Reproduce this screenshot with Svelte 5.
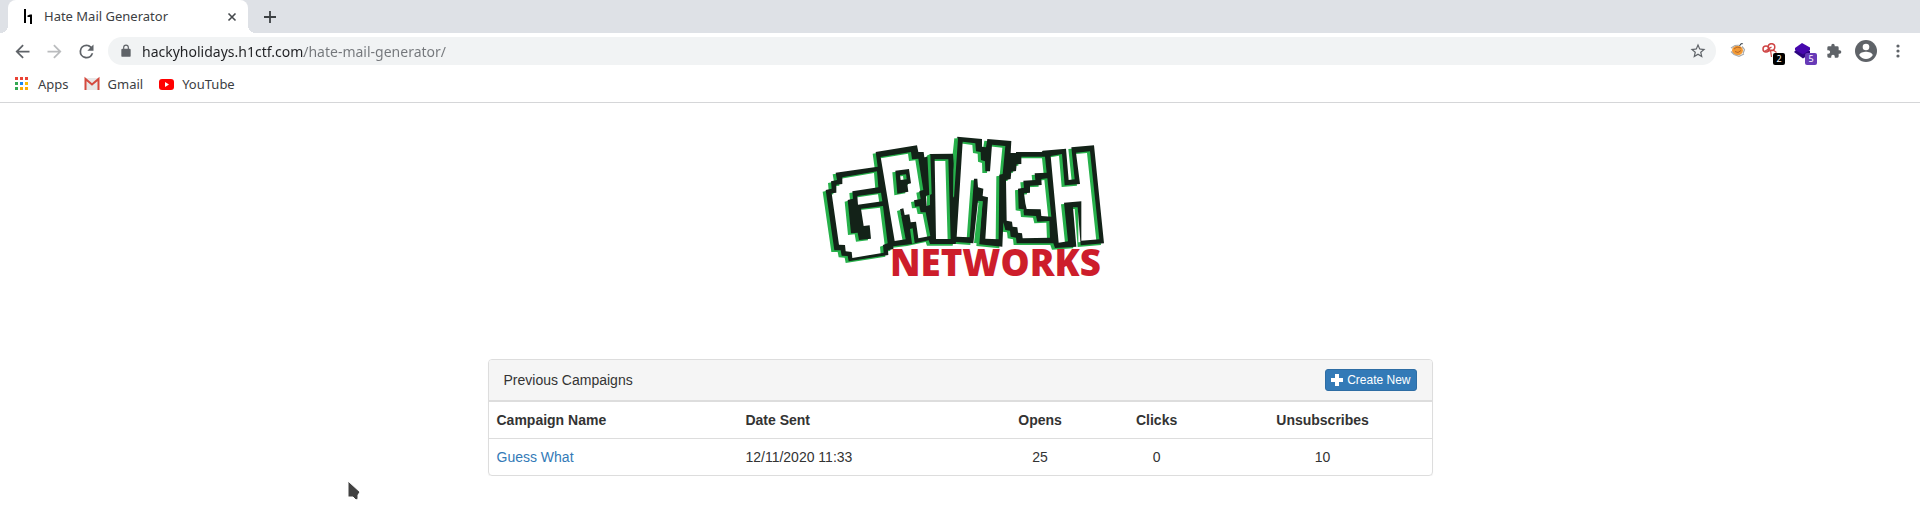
<script>
  const bookmarks = ['Apps', 'Gmail', 'YouTube'];
  const campaigns = [
    { name: 'Guess What', sent: '12/11/2020 11:33', opens: 25, clicks: 0, unsubscribes: 10 }
  ];
  const appColors = ['#ea4335', '#ea4335', '#ea4335', '#34a853', '#1a87f0', '#fbbc05', '#34a853', '#fbab05', '#fbab05'];
  let url = $state('hackyholidays.h1ctf.com/hate-mail-generator/');
</script>

<div class="browser">
  <div class="tabstrip">
    <div class="tab">
      <svg class="favicon" width="16" height="16" viewBox="0 0 16 16" aria-hidden="true">
        <path d="M4 0h2v14H4zM10 5.500h2V15h-2V8H7.500V6.500z" />
      </svg>
      <span class="tab-title">Hate Mail Generator</span>
      <button class="icon small" aria-label="Close tab">
        <svg width="10" height="10" viewBox="0 0 10 10"><path d="M1.500 1.500l7 7m0-7l-7 7" stroke="#45494d" stroke-width="1.600" /></svg>
      </button>
    </div>
    <button class="icon newtab" aria-label="New tab">
      <svg width="12" height="12" viewBox="0 0 12 12"><path d="M6 0v12M0 6h12" stroke="#3c4043" stroke-width="1.800" /></svg>
    </button>
  </div>

  <div class="toolbar">
    <button class="icon" aria-label="Back">
      <svg width="21" height="21" viewBox="0 0 24 24"><path fill="#5f6368" d="M20 11H7.830l5.590-5.590L12 4l-8 8 8 8 1.410-1.410L7.830 13H20z" /></svg>
    </button>
    <button class="icon" aria-label="Forward">
      <svg width="21" height="21" viewBox="0 0 24 24"><path fill="#babcbe" d="M4 11h12.170l-5.590-5.590L12 4l8 8-8 8-1.410-1.410L16.170 13H4z" /></svg>
    </button>
    <button class="icon" aria-label="Reload">
      <svg width="21" height="21" viewBox="0 0 24 24"><path fill="#5f6368" d="M17.650 6.350A7.950 7.950 0 0 0 12 4a8 8 0 1 0 7.730 10h-2.080A6 6 0 1 1 12 6c1.660 0 3.140.690 4.220 1.780L13 11h7V4z" /></svg>
    </button>
    <div class="omnibox">
      <svg width="14" height="14" viewBox="0 0 24 24" aria-hidden="true"><path fill="#5f6368" d="M18 8h-1V6A5 5 0 0 0 7 6v2H6a2 2 0 0 0-2 2v10a2 2 0 0 0 2 2h12a2 2 0 0 0 2-2V10a2 2 0 0 0-2-2zM9 8V6a3 3 0 0 1 6 0v2z" /></svg>
      <input type="text" aria-label="Address" bind:value={url} />
      <button class="icon small" aria-label="Bookmark this page">
        <svg width="18" height="18" viewBox="0 0 24 24"><path fill="#5f6368" d="M22 9.240l-7.190-.62L12 2 9.190 8.630 2 9.240l5.460 4.730L5.820 21 12 17.270 18.180 21l-1.630-7.030zM12 15.400l-3.760 2.270 1-4.280-3.320-2.880 4.380-.38L12 6.100l1.710 4.040 4.380.38-3.320 2.880 1 4.280z" /></svg>
      </button>
    </div>
    <button class="icon" aria-label="Cookie extension">
      <svg width="16" height="16" viewBox="0 0 16 16">
        <ellipse cx="7.500" cy="7.500" rx="5.500" ry="4.800" fill="#f29a35" />
        <path d="M1 5l4-2.500 5-.5 3-1.500M1 8.500l3 3 5 1.800 5-2.300M12 3.500l2.500 3-1.500 4" fill="none" stroke="#a9abad" stroke-width="1.200" />
        <path d="M4 6l3-2 4 1M5 8.500l3 1 3-2" fill="none" stroke="#b4682a" stroke-width="1" />
        <path d="M9.500 3l2-3 1 1" fill="none" stroke="#3e4b55" stroke-width="1" />
      </svg>
    </button>
    <button class="icon" aria-label="Request tracker extension">
      <svg width="16" height="16" viewBox="0 0 16 16" fill="none" stroke="#cf4545" stroke-width="1.500">
        <circle cx="4" cy="6" r="3" /><circle cx="9.500" cy="4" r="3.300" /><path d="M5 8l7-.5 2.500 2M8.500 7l1 7M2.500 8.500l7-4.500" stroke-width="1.200" />
      </svg>
      <span class="badge">2</span>
    </button>
    <button class="icon" aria-label="Technology extension">
      <svg width="16" height="16" viewBox="0 0 16 16"><path fill="#2c0580" d="M0 9l2-2h12l2 1v3l-7 4.500z" /><path fill="#4608ad" d="M8 0l8 4.500v2.500l-7 4.500L1 7V5z" /></svg>
      <span class="badge purple">5</span>
    </button>
    <button class="icon" aria-label="Extensions">
      <svg width="16" height="16" viewBox="0 0 24 24"><path fill="#5f6368" d="M20.500 11H19V7a2 2 0 0 0-2-2h-4V3.500a2.500 2.500 0 0 0-5 0V5H4a2 2 0 0 0-2 2v3.800h1.500a2.700 2.700 0 0 1 0 5.400H2V20a2 2 0 0 0 2 2h3.800v-1.500a2.700 2.700 0 0 1 5.400 0V22H17a2 2 0 0 0 2-2v-4h1.500a2.500 2.500 0 0 0 0-5z" /></svg>
    </button>
    <button class="icon" aria-label="Profile">
      <svg width="22" height="22" viewBox="0 0 22 22"><circle cx="11" cy="11" r="11" fill="#5f6368" /><circle cx="11" cy="7" r="3.300" fill="#fff" /><path fill="#fff" d="M4.300 15.200c0-2.300 4.500-3.400 6.700-3.400s6.700 1.100 6.700 3.400a7.900 7.900 0 0 1-13.400 0z" /></svg>
    </button>
    <button class="icon" aria-label="Menu">
      <svg width="4" height="14" viewBox="0 0 4 14" fill="#5f6368"><circle cx="2" cy="2" r="1.600" /><circle cx="2" cy="7" r="1.600" /><circle cx="2" cy="12" r="1.600" /></svg>
    </button>
  </div>

  <nav class="bookmarks" aria-label="Bookmarks">
    {#each bookmarks as label}
      <a href="#top">
        {#if label === 'Apps'}
          <svg width="16" height="16" viewBox="0 0 16 16" aria-hidden="true">
            {#each appColors as color, i}
              <rect x={1 + (i % 3) * 5} y={1 + Math.floor(i / 3) * 5} width="3" height="3" fill={color} />
            {/each}
          </svg>
        {:else if label === 'Gmail'}
          <svg width="16" height="16" viewBox="0 0 16 16" aria-hidden="true">
            <path fill="#e8e8e8" d="M1 2h14v12H1z" /><path fill="none" stroke="#d44a3f" stroke-width="2" d="M1.500 14V3L8 8.500 14.500 3V14" />
          </svg>
        {:else}
          <svg width="16" height="16" viewBox="0 0 16 16" aria-hidden="true">
            <rect x="1" y="3" width="15" height="11" rx="3" fill="#f00" /><path fill="#fff" d="M7 6l4 2.500L7 11z" />
          </svg>
        {/if}
        <span>{label}</span>
      </a>
    {/each}
  </nav>
</div>

<main id="top">
  <svg class="logo" viewBox="0 0 900 510" role="img" aria-label="Grinch Networks">
    <defs>
      <path
        id="blocks"
        fill-rule="evenodd"
        d="M77 143L203 125L197 81L321 61L325 81L341 81L343 97L355 95L360 87L429 86L432 130L442 35L516 42L516 65L528 67L532 42L604 48L602 84L618 84L618 81L695 81L698 77L768 71L776 165L794 163L784 67L852 61L882 355L812 361L803 247L789 247L799 365L735 369L730 355L620 355L618 338L602 335L600 317L586 315L580 292L577 365L508 358L518 229L504 227L490 355L438 351L437 357L360 357L356 346L300 358L250 364L250 372L234 376L235 390L116 409L113 393L95 392L92 376L73 376L47 195L65 191L63 169L81 165Z
        M97 157L201 139L205 187L127 199L129 221L113 225L123 325L143 323L147 345L183 341L179 301L161 303L153 251L219 243L233 355L219 360L221 383L127 399L125 381L107 379L105 360L87 359L65 205L79 203L79 179L97 177Z
        M142 213L213 203L217 229L144 239Z
        M212 96L303 81L306 103L325 101L340 195L328 198L332 222L312 226L315 245L328 244L332 262L347 262L361 333L325 340L318 290L302 292L298 268L284 270L280 250L270 253L287 343L254 348Z
        M256 137L297 132L303 175L292 178L295 200L262 206Z
        M270 150L288 148L290 163L272 165Z
        M348 212L360 209L360 240L350 243Z
        M374 103L415 103L422 342L378 342Z
        M458 50L496 55L498 79L512 81L513 105L525 109L526 139L540 139L546 59L586 63L578 147L568 149L566 343L526 341L534 217L518 213L520 191L504 187L502 161L492 161L479 337L440 335Z
        M634 95L705 95L710 143L674 145L676 165L640 167L642 188L624 191L626 251L640 253L642 271L678 273L682 290L718 288L720 338L638 340L636 325L624 323L622 307L608 305L606 290L590 287L588 165L602 162L604 140L618 138L620 118L634 117Z
        M712 160L694 162L695 180L660 182L660 203L642 205L646 235L650 252L692 253L694 273L724 275Z
        M722 93L756 87L764 181L810 177L798 83L840 79L868 343L814 347L814 229L762 233L774 349L746 353Z"
      />
    </defs>
    <use href="#blocks" fill="#27b14b" transform="translate(-9 5)" />
    <use href="#blocks" fill="#132218" />
    <path fill="#27b14b" d="M352 91l9-3 4 119-7 4zM440 38l4 2-12 178-3-4 1-80zM300 312l8-2 6 44-8 2zM506 230l12-1-12 126-14-1z" />
    <text x="240" y="452">NETWORKS</text>
  </svg>

  <section class="panel">
    <header>
      <h1>Previous Campaigns</h1>
      <button class="create">
        <svg width="12" height="12" viewBox="0 0 12 12" aria-hidden="true"><path fill="#fff" d="M4 0h4v4h4v4H8v4H4V8H0V4h4z" /></svg>
        Create New
      </button>
    </header>
    <table>
      <thead>
        <tr>
          <th class="name">Campaign Name</th>
          <th class="date">Date Sent</th>
          <th class="opens num">Opens</th>
          <th class="clicks num">Clicks</th>
          <th class="num">Unsubscribes</th>
        </tr>
      </thead>
      <tbody>
        {#each campaigns as c}
          <tr>
            <td><a href="#top">{c.name}</a></td>
            <td>{c.sent}</td>
            <td class="num">{c.opens}</td>
            <td class="num">{c.clicks}</td>
            <td class="num">{c.unsubscribes}</td>
          </tr>
        {/each}
      </tbody>
    </table>
  </section>
</main>

<svg class="pointer" width="16" height="24" viewBox="0 0 16 24" aria-hidden="true">
  <path d="M1 1v16h5l3 3 2-1v-4l2-3z" fill="#414141" stroke="#fff" stroke-width="1" />
</svg>

<style>
  :global(body) {
    background: #fff;
  }
  .browser {
    font-family: 'Noto Sans', sans-serif;
    font-size: 13px;
    color: #3c4043;
    border-bottom: 1px solid #d5d6d8;
  }
  button {
    font: inherit;
    border: 0;
    background: none;
    padding: 0;
  }
  a {
    text-decoration: none;
  }
  .tabstrip {
    display: flex;
    align-items: center;
    height: 33px;
    padding: 0 8px;
    background: #dee1e6;
  }
  .tab {
    box-sizing: border-box;
    position: relative;
    display: flex;
    align-items: center;
    gap: 8px;
    width: 240px;
    height: 33px;
    padding: 0 6px 0 12px;
    background: #fff;
    border-radius: 8px 8px 0 0;
  }
  .tab::before,
  .tab::after {
    content: '';
    position: absolute;
    bottom: 0;
    width: 8px;
    height: 8px;
  }
  .tab::before {
    left: -8px;
    background: radial-gradient(circle at 0 0, #dee1e6 8px, #fff 8px);
  }
  .tab::after {
    right: -8px;
    background: radial-gradient(circle at 100% 0, #dee1e6 8px, #fff 8px);
  }
  .tab-title {
    flex: 1;
    line-height: 16px;
    padding-bottom: 2px;
  }
  .icon {
    position: relative;
    flex: none;
    display: flex;
    align-items: center;
    justify-content: center;
    width: 28px;
    height: 28px;
  }
  .icon.small {
    width: 20px;
  }
  .newtab {
    margin-left: 8px;
  }
  .toolbar {
    display: flex;
    align-items: center;
    gap: 4px;
    padding: 4px 8px;
  }
  .omnibox {
    flex: 1;
    display: flex;
    align-items: center;
    gap: 9px;
    height: 28px;
    margin: 0 4px;
    padding: 0 8px 0 11px;
    border-radius: 14px;
    background: #f1f3f4;
  }
  .omnibox input {
    flex: 1;
    min-width: 0;
    border: 0;
    padding: 0;
    outline: 0;
    font: 14px 'Noto Sans', sans-serif;
    color: transparent;
    background: linear-gradient(90deg, #202124 162px, #74777b 162px);
    background-clip: text;
    -webkit-background-clip: text;
  }
  .badge {
    position: absolute;
    right: -1px;
    bottom: 0;
    width: 12px;
    height: 12px;
    border-radius: 2px;
    background: #000;
    color: #fff;
    font-size: 9px;
    line-height: 12px;
  }
  .badge.purple {
    background: #673ab7;
  }
  .bookmarks {
    display: flex;
    align-items: center;
    gap: 15px;
    height: 29px;
    padding: 0 14px 4px;
  }
  .bookmarks a {
    display: flex;
    align-items: center;
    gap: 8px;
    color: #3c4043;
  }
  main {
    box-sizing: border-box;
    max-width: 945px;
    margin: 0 auto;
    padding-top: 22px;
    font: 14px/20px 'Liberation Sans', sans-serif;
    color: #333;
  }
  .logo {
    display: block;
    width: 300px;
    margin: 0 auto 64px;
  }
  .logo text {
    font: 800 110px 'Open Sans', sans-serif;
    fill: #cd1d2b;
  }
  .panel {
    border: 1px solid #ddd;
    border-radius: 4px;
    box-shadow: 0 1px 1px rgba(0, 0, 0, 0.05);
  }
  .panel header {
    display: flex;
    align-items: center;
    justify-content: space-between;
    padding: 10px 15px;
    background: #f5f5f5;
    border-bottom: 1px solid #ddd;
    border-radius: 3px 3px 0 0;
  }
  h1 {
    margin: 0;
    font: inherit;
  }
  .create {
    display: flex;
    align-items: center;
    gap: 4px;
    height: 22px;
    margin: -1px 0;
    padding: 0 5px;
    border: 1px solid #2e6da4;
    border-radius: 3px;
    background: #337ab7;
    color: #fff;
    font-size: 12px;
  }
  table {
    width: 100%;
    table-layout: fixed;
    border-collapse: separate;
    border-spacing: 0;
  }
  th,
  td {
    box-sizing: border-box;
    padding: 8px;
    border-top: 1px solid #ddd;
    text-align: left;
  }
  .num {
    text-align: center;
  }
  .name {
    width: 26.4%;
  }
  .date {
    width: 25.8%;
  }
  .opens {
    width: 12.6%;
  }
  .clicks {
    width: 12.1%;
  }
  td a {
    color: #337ab7;
  }
  .pointer {
    position: absolute;
    left: 347px;
    top: 480px;
  }
</style>
